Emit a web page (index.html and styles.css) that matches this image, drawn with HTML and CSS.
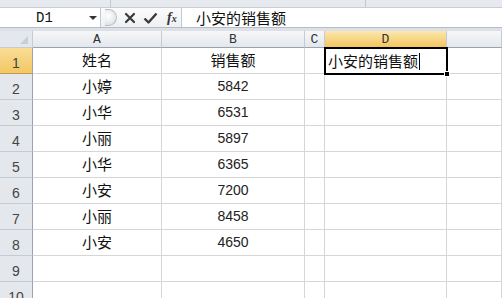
FILE: index.html
```html
<!DOCTYPE html>
<html lang="zh-CN">
<head>
  <meta charset="UTF-8">
  <title>销售额</title>
  <link rel="stylesheet" href="styles.css">
</head>
<body>
  <div class="ribbon-edge">
    <span class="edge-split one"></span>
    <span class="edge-split two"></span>
  </div>

  <div class="formula-bar">
    <div class="name-box">
      <span class="cell-ref">D1</span>
      <span class="drop-arrow"></span>
    </div>
    <div class="fx-tools">
      <span class="bevel"></span>
      <svg class="tool" width="12" height="12" viewBox="0 0 12 12">
        <path d="M2 2 L10 10 M10 2 L2 10" stroke="#3a3a3a" stroke-width="2.2" stroke-linecap="round"/>
      </svg>
      <svg class="tool" width="15" height="12" viewBox="0 0 15 12">
        <path d="M1.5 6.5 L5.5 10.5 L13.5 1.5" stroke="#3a3a3a" stroke-width="2.4" fill="none" stroke-linejoin="round"/>
      </svg>
      <span class="fx">f<small>x</small></span>
    </div>
    <div class="formula-input">小安的销售额</div>
  </div>

  <div class="gap-strip"></div>

  <div class="sheet">
    <div class="corner"><span class="corner-tri"></span></div>
    <div class="col-head">A</div>
    <div class="col-head">B</div>
    <div class="col-head">C</div>
    <div class="col-head active">D</div>
    <div class="col-head"></div>

    <div class="row-head active">1</div>
    <div class="cell center">姓名</div>
    <div class="cell center">销售额</div>
    <div class="cell"></div>
    <div class="cell editing">小安的销售额<span class="caret"></span><span class="fill-handle"></span></div>
    <div class="cell"></div>

    <div class="row-head">2</div>
    <div class="cell center">小婷</div>
    <div class="cell center num">5842</div>
    <div class="cell"></div><div class="cell"></div><div class="cell"></div>

    <div class="row-head">3</div>
    <div class="cell center">小华</div>
    <div class="cell center num">6531</div>
    <div class="cell"></div><div class="cell"></div><div class="cell"></div>

    <div class="row-head">4</div>
    <div class="cell center">小丽</div>
    <div class="cell center num">5897</div>
    <div class="cell"></div><div class="cell"></div><div class="cell"></div>

    <div class="row-head">5</div>
    <div class="cell center">小华</div>
    <div class="cell center num">6365</div>
    <div class="cell"></div><div class="cell"></div><div class="cell"></div>

    <div class="row-head">6</div>
    <div class="cell center">小安</div>
    <div class="cell center num">7200</div>
    <div class="cell"></div><div class="cell"></div><div class="cell"></div>

    <div class="row-head">7</div>
    <div class="cell center">小丽</div>
    <div class="cell center num">8458</div>
    <div class="cell"></div><div class="cell"></div><div class="cell"></div>

    <div class="row-head">8</div>
    <div class="cell center">小安</div>
    <div class="cell center num">4650</div>
    <div class="cell"></div><div class="cell"></div><div class="cell"></div>

    <div class="row-head">9</div>
    <div class="cell"></div><div class="cell"></div><div class="cell"></div><div class="cell"></div><div class="cell"></div>

    <div class="row-head">10</div>
    <div class="cell"></div><div class="cell"></div><div class="cell"></div><div class="cell"></div><div class="cell"></div>
  </div>
</body>
</html>
```

FILE: styles.css
```css
* {
  box-sizing: border-box;
}
body {
  margin: 0;
  padding: 0;
  background: #fff;
  font-family: "Noto Sans CJK SC", "Liberation Sans", sans-serif;
  color: #111;
  overflow: hidden;
}

.ribbon-edge {
  position: relative;
  height: 8px;
  background: #e6eaef;
  border-bottom: 1px solid #c9ced6;
}
.edge-split {
  position: absolute;
  top: 0;
  width: 1px;
  height: 7px;
  background: #c2c8d0;
}
.edge-split.one { left: 110px; }
.edge-split.two { left: 365px; }

.formula-bar {
  display: flex;
  height: 19px;
  background: #fff;
}
.name-box {
  width: 101px;
  display: flex;
  align-items: center;
  border-right: 1px solid #c3c9d1;
  padding-left: 36px;
}
.cell-ref {
  font-family: "Liberation Mono", monospace;
  font-size: 14px;
  color: #111;
}
.drop-arrow {
  margin-left: 36px;
  width: 0;
  height: 0;
  border-left: 4px solid transparent;
  border-right: 4px solid transparent;
  border-top: 4px solid #333;
}
.fx-tools {
  width: 81px;
  display: flex;
  align-items: center;
  gap: 7px;
  background: linear-gradient(#fbfbfc, #eef0f3);
  border-right: 1px solid #c3c9d1;
}
.bevel {
  width: 12px;
  height: 17px;
  margin-left: 4px;
  border-radius: 0 9px 9px 0;
  border: 1px solid #b8bec6;
  border-left: none;
  background: radial-gradient(circle at 30% 40%, #fff, #d5d9df);
}
.tool {
  display: block;
}
.fx {
  font-family: "Liberation Serif", serif;
  font-style: italic;
  font-weight: bold;
  font-size: 14px;
  color: #333;
  margin-left: 2px;
}
.fx small {
  font-size: 10px;
}
.formula-input {
  flex: 1;
  padding-left: 14px;
  font-size: 15px;
  line-height: 19px;
  color: #111;
}

.gap-strip {
  height: 4px;
  background: #dde1e7;
  border-top: 1px solid #b6bdc6;
}

.sheet {
  display: grid;
  grid-template-columns: 33px 129px 143px 20px 122px 1fr;
  grid-template-rows: 17px repeat(10, 26px);
}

.corner {
  position: relative;
  background: #e4e8ed;
  border-right: 1px solid #c5cbd2;
  border-bottom: 1px solid #c5cbd2;
}
.corner-tri {
  position: absolute;
  right: 4px;
  bottom: 3px;
  width: 0;
  height: 0;
  border-left: 8px solid transparent;
  border-bottom: 8px solid #c9ced5;
}

.col-head {
  display: flex;
  align-items: center;
  justify-content: center;
  background: linear-gradient(#f6f7f9, #e3e7ec);
  border-right: 1px solid #c5cbd2;
  border-bottom: 1px solid #9aa4b0;
  font-family: "Liberation Mono", monospace;
  font-size: 13px;
  color: #333;
}
.col-head.active {
  background: linear-gradient(#fbe7ae, #f3c55e);
  border-bottom-color: #c29b44;
}

.row-head {
  display: flex;
  align-items: flex-end;
  justify-content: center;
  padding-bottom: 2px;
  background: #e4e8ed;
  border-right: 1px solid #9aa4b0;
  border-bottom: 1px solid #c5cbd2;
  font-family: "Liberation Sans", sans-serif;
  font-size: 14px;
  color: #444;
}
.row-head.active {
  background: linear-gradient(#f9dc95, #f3c865);
  border-bottom-color: #c29b44;
}

.cell {
  display: flex;
  align-items: flex-end;
  padding: 0 3px 3px;
  border-right: 1px solid #d6d6d6;
  border-bottom: 1px solid #d6d6d6;
  font-size: 15px;
  line-height: 20px;
  white-space: nowrap;
}
.cell.center {
  justify-content: center;
}
.cell.num {
  font-family: "Liberation Sans", sans-serif;
  font-size: 14px;
  color: #222;
}
.cell.editing {
  position: relative;
  align-items: center;
  padding-bottom: 0;
  border: none;
  outline: 2px solid #000;
  outline-offset: -1px;
}
.caret {
  display: inline-block;
  width: 1px;
  height: 17px;
  margin-left: 1px;
  background: #000;
}
.fill-handle {
  position: absolute;
  right: -3px;
  bottom: -3px;
  width: 6px;
  height: 6px;
  background: #000;
  border: 1px solid #fff;
}
```
